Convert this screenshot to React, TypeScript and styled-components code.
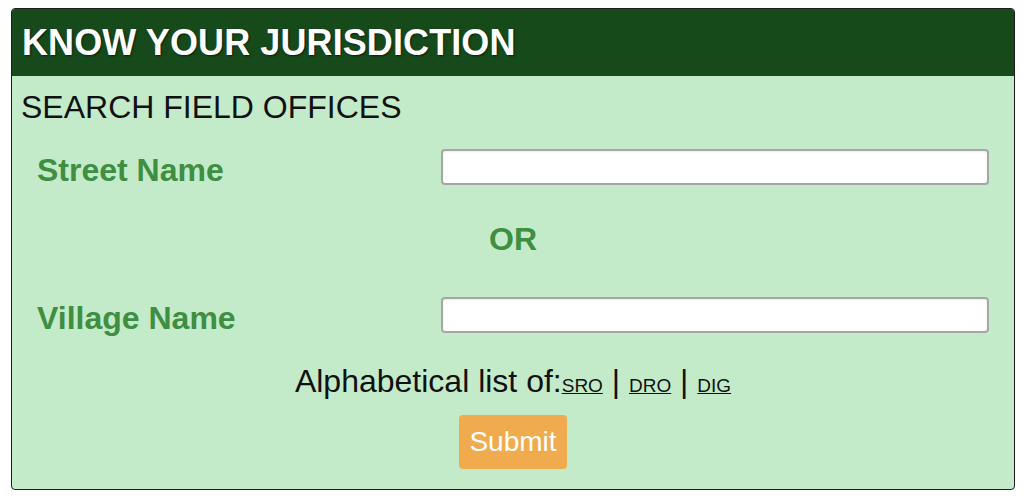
import React from "react";
import styled, { createGlobalStyle } from "styled-components";

const Global = createGlobalStyle`
  html, body { margin: 0; padding: 0; background: #ffffff; }
  body { font-family: "Liberation Sans", Arial, sans-serif; }
  * { box-sizing: border-box; }
`;

const Page = styled.div`
  padding: 8px 0 0 11px;
`;

const Panel = styled.section`
  width: 1004px;
  border: 1px solid #1e1e1e;
  border-radius: 4px;
  overflow: hidden;
  background: #c3ebca;
`;

const Header = styled.header`
  height: 67px;
  background: #174a1b;
  display: flex;
  align-items: center;
  padding-left: 10px;
`;

const Title = styled.h1`
  margin: 0;
  font-size: 36px;
  font-weight: 700;
  color: #ffffff;
  line-height: 1;
  letter-spacing: 0.1px;
  text-shadow: 1px 1px 2px #0a200c;
`;

const Body = styled.div`
  padding: 13px 25px 20px 9px;
  display: flex;
  flex-direction: column;
`;

const Heading = styled.h2`
  margin: 0;
  font-size: 32px;
  font-weight: 400;
  line-height: 36px;
  color: #111111;
`;

const FieldRow = styled.div<{ $top: number }>`
  display: grid;
  grid-template-columns: 420px 1fr;
  align-items: start;
  height: 36px;
  margin-top: ${(p) => p.$top}px;
`;

const Label = styled.label`
  padding-left: 16px;
  padding-top: 3px;
  font-size: 32px;
  font-weight: 700;
  color: #3f8e42;
  line-height: 36px;
`;

const Input = styled.input`
  height: 36px;
  width: 100%;
  border: 2px solid #a6a6a6;
  border-radius: 4px;
  background: #ffffff;
  box-shadow: inset 0 1px 2px rgba(0, 0, 0, 0.08);
  outline: none;
`;

const Or = styled.div`
  margin-top: 36px;
  text-align: center;
  font-size: 32px;
  font-weight: 700;
  line-height: 36px;
  color: #3f8e42;
  padding-left: 16px;
`;

const ListLine = styled.div`
  margin-top: 30px;
  height: 36px;
  text-align: center;
  font-size: 32px;
  line-height: 36px;
  color: #111111;
  padding-left: 16px;
`;

const ListLink = styled.a`
  font-size: 19px;
  line-height: 1;
  color: #111111;
  text-decoration: underline;
`;

const SubmitWrap = styled.div`
  margin-top: 16px;
  display: flex;
  justify-content: center;
  padding-left: 16px;
`;

const Submit = styled.button`
  height: 54px;
  padding: 0 10px;
  border: none;
  border-radius: 4px;
  background: #f0ab4f;
  color: #ffffff;
  font-family: "Liberation Sans", Arial, sans-serif;
  font-size: 28px;
  cursor: pointer;
`;

export default function App() {
  return (
    <>
      <Global />
      <Page>
        <Panel>
          <Header>
            <Title>KNOW YOUR JURISDICTION</Title>
          </Header>
          <Body>
            <Heading>SEARCH FIELD OFFICES</Heading>
            <FieldRow $top={24}>
              <Label htmlFor="street">Street Name</Label>
              <Input id="street" type="text" />
            </FieldRow>
            <Or>OR</Or>
            <FieldRow $top={40}>
              <Label htmlFor="village">Village Name</Label>
              <Input id="village" type="text" />
            </FieldRow>
            <ListLine>
              Alphabetical list of:<ListLink href="#">SRO</ListLink> |{" "}
              <ListLink href="#">DRO</ListLink> | <ListLink href="#">DIG</ListLink>
            </ListLine>
            <SubmitWrap>
              <Submit type="button">Submit</Submit>
            </SubmitWrap>
          </Body>
        </Panel>
      </Page>
    </>
  );
}
